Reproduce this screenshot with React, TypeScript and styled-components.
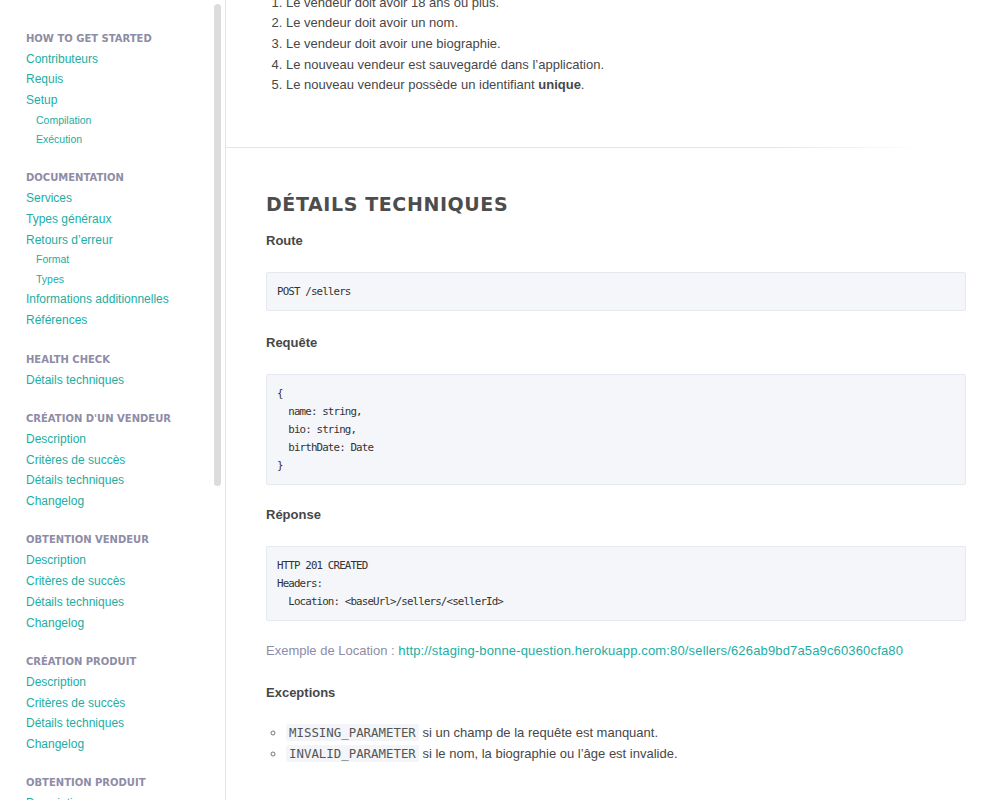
import React from "react";
import styled, { createGlobalStyle } from "styled-components";

const Global = createGlobalStyle`
  html, body { margin: 0; padding: 0; background: #fff; }
  body { font-family: "Liberation Sans", Arial, sans-serif; }
  * { box-sizing: border-box; }
`;

const teal = "#22ada3";
const headGrey = "#8e8ca6";
const text = "#474747";

const Page = styled.div`
  display: flex;
  width: 988px;
  height: 800px;
  overflow: hidden;
`;

const Sidebar = styled.nav`
  position: relative;
  flex: 0 0 226px;
  height: 800px;
  overflow: hidden;
  border-right: 1px solid #e4e4ec;
  padding: 27.5px 0 0 26px;
  display: flex;
  flex-direction: column;
`;

const Scrollbar = styled.div`
  position: absolute;
  top: 4px;
  right: 4px;
  width: 7px;
  height: 482px;
  border-radius: 4px;
  background: #dcdcdc;
`;

const NavSection = styled.div`
  display: flex;
  flex-direction: column;
  margin-bottom: 17.7px;
`;

const NavHeading = styled.div`
  font-family: "DejaVu Sans", Verdana, sans-serif;
  font-weight: 700;
  font-size: 10px;
  letter-spacing: 0px;
  line-height: 21px;
  color: ${headGrey};
  text-transform: uppercase;
  white-space: nowrap;
`;

const NavItem = styled.a<{ $sub?: boolean }>`
  display: block;
  color: ${teal};
  text-decoration: none;
  white-space: nowrap;
  font-size: ${(p) => (p.$sub ? "10.5px" : "12px")};
  line-height: ${(p) => (p.$sub ? "19.5px" : "20.7px")};
  padding-left: ${(p) => (p.$sub ? "10px" : "0")};
`;

const Main = styled.main`
  flex: 1;
  height: 800px;
  overflow: hidden;
  display: flex;
  flex-direction: column;
`;

const Section = styled.section<{ $top?: string }>`
  padding: 0 22px 0 40px;
  margin-top: ${(p) => p.$top || "0"};
  color: ${text};
  font-size: 13px;
`;

const OrderedList = styled.ol`
  margin: 0;
  padding-left: 20px;
  li {
    line-height: 20.7px;
    padding-left: 0;
  }
`;

const Rule = styled.div`
  height: 1px;
  margin-top: 51px;
  background: linear-gradient(to right, #e2e5ec 0%, #e2e5ec 72%, rgba(226, 229, 236, 0) 92%);
`;

const H2 = styled.h2`
  margin: 43px 0 0;
  font-family: "DejaVu Sans", Verdana, sans-serif;
  font-weight: 700;
  font-size: 19px;
  letter-spacing: 0.6px;
  line-height: 26px;
  color: #4d4d4d;
  text-transform: uppercase;
`;

const H4 = styled.h4<{ $mt: number }>`
  margin: ${(p) => p.$mt}px 0 0;
  font-size: 13px;
  font-weight: 700;
  line-height: 20px;
  color: ${text};
`;

const CodeBlock = styled.pre`
  margin: 21px 0 0;
  padding: 9.5px 10px;
  background: #f4f6fa;
  border: 1px solid #e6e9ef;
  border-radius: 2px;
  font-family: "DejaVu Sans Mono", monospace;
  font-size: 10.8px;
  letter-spacing: -0.85px;
  line-height: 18px;
  color: #333;
  white-space: pre;
`;

const Para = styled.p`
  margin: 20px 0 0;
  line-height: 20px;
  color: ${headGrey};
`;

const Link = styled.a`
  color: ${teal};
  text-decoration: none;
  letter-spacing: 0.15px;
`;

const BulletList = styled.ul`
  margin: 19px 0 0;
  padding-left: 20px;
  list-style: circle;
  li {
    line-height: 21px;
    padding-left: 0;
  }
  li::marker {
    color: #777;
    font-size: 14px;
  }
`;

const InlineCode = styled.code`
  font-family: "DejaVu Sans Mono", monospace;
  font-size: 12.4px;
  line-height: 1;
  background: #f3f5f9;
  color: #555;
  padding: 1px 3px;
  border-radius: 2px;
`;

type Nav = { title: string; items: { label: string; sub?: boolean }[] };

const nav: Nav[] = [
  {
    title: "How to get started",
    items: [
      { label: "Contributeurs" },
      { label: "Requis" },
      { label: "Setup" },
      { label: "Compilation", sub: true },
      { label: "Exécution", sub: true },
    ],
  },
  {
    title: "Documentation",
    items: [
      { label: "Services" },
      { label: "Types généraux" },
      { label: "Retours d’erreur" },
      { label: "Format", sub: true },
      { label: "Types", sub: true },
      { label: "Informations additionnelles" },
      { label: "Références" },
    ],
  },
  { title: "Health check", items: [{ label: "Détails techniques" }] },
  {
    title: "Création d'un vendeur",
    items: [
      { label: "Description" },
      { label: "Critères de succès" },
      { label: "Détails techniques" },
      { label: "Changelog" },
    ],
  },
  {
    title: "Obtention vendeur",
    items: [
      { label: "Description" },
      { label: "Critères de succès" },
      { label: "Détails techniques" },
      { label: "Changelog" },
    ],
  },
  {
    title: "Création produit",
    items: [
      { label: "Description" },
      { label: "Critères de succès" },
      { label: "Détails techniques" },
      { label: "Changelog" },
    ],
  },
  {
    title: "Obtention produit",
    items: [
      { label: "Description" },
      { label: "Critères de succès" },
      { label: "Détails techniques" },
      { label: "Changelog" },
    ],
  },
];

export default function App() {
  return (
    <>
      <Global />
      <Page>
        <Sidebar>
          {nav.map((s, i) => (
            <NavSection key={i}>
              <NavHeading>{s.title}</NavHeading>
              {s.items.map((it, j) => (
                <NavItem key={j} $sub={it.sub} href="#">
                  {it.label}
                </NavItem>
              ))}
            </NavSection>
          ))}
          <Scrollbar />
        </Sidebar>
        <Main>
          <Section $top="-7.5px">
            <OrderedList>
              <li>Le vendeur doit avoir 18 ans ou plus.</li>
              <li>Le vendeur doit avoir un nom.</li>
              <li>Le vendeur doit avoir une biographie.</li>
              <li>Le nouveau vendeur est sauvegardé dans l’application.</li>
              <li>
                Le nouveau vendeur possède un identifiant <strong>unique</strong>.
              </li>
            </OrderedList>
          </Section>
          <Rule />
          <Section>
            <H2>Détails techniques</H2>
            <H4 $mt={14}>Route</H4>
            <CodeBlock>POST /sellers</CodeBlock>
            <H4 $mt={22}>Requête</H4>
            <CodeBlock>{`{
  name: string,
  bio: string,
  birthDate: Date
}`}</CodeBlock>
            <H4 $mt={20}>Réponse</H4>
            <CodeBlock>{`HTTP 201 CREATED
Headers:
  Location: <baseUrl>/sellers/<sellerId>`}</CodeBlock>
            <Para>
              Exemple de Location :{" "}
              <Link href="#">
                http://staging-bonne-question.herokuapp.com:80/sellers/626ab9bd7a5a9c60360cfa80
              </Link>
            </Para>
            <H4 $mt={22}>Exceptions</H4>
            <BulletList>
              <li>
                <InlineCode>MISSING_PARAMETER</InlineCode> si un champ de la requête est manquant.
              </li>
              <li>
                <InlineCode>INVALID_PARAMETER</InlineCode> si le nom, la biographie ou l’âge est invalide.
              </li>
            </BulletList>
          </Section>
        </Main>
      </Page>
    </>
  );
}
